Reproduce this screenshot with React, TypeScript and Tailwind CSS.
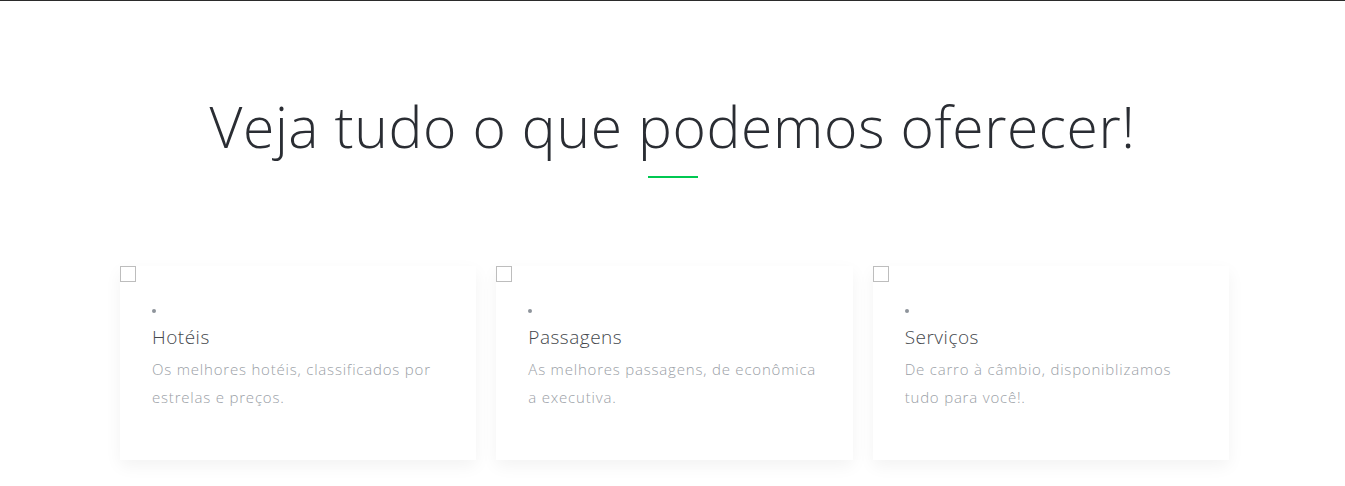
const cards = [
  {
    title: "Hotéis",
    text: "Os melhores hotéis, classificados por estrelas e preços.",
  },
  {
    title: "Passagens",
    text: "As melhores passagens, de econômica a executiva.",
  },
  {
    title: "Serviços",
    text: "De carro à câmbio, disponiblizamos tudo para você!.",
  },
];

export default function App() {
  return (
    <div className="min-h-[486px] bg-white font-['Open_Sans',sans-serif] font-light border-t border-[#2b2b2b]">
      <div className="pt-[91px] text-center">
        <h2 className="text-[57px] leading-[1.2] tracking-[0.6px] text-[#2a2d33] font-light">
          Veja tudo o que podemos oferecer!
        </h2>
        <div className="mx-auto mt-[16px] h-[2px] w-[50px] bg-[#00c851]" />
      </div>

      <div className="ml-[120px] mt-[88px] grid w-[1109px] grid-cols-3 gap-5">
        {cards.map((c) => (
          <div
            key={c.title}
            className="relative h-[194px] bg-white shadow-[0_6px_16px_rgba(0,0,0,0.05)]"
          >
            <div className="h-4 w-4 border border-[#bdbdbd]" />
            <div className="pl-8 pt-[27px]">
              <div className="h-[4px] w-[4px] rounded-full bg-[#8e949b]" />
              <h3 className="mt-[10px] text-[19px] leading-[28px] tracking-[0.5px] text-[#45484d] font-light">
                {c.title}
              </h3>
              <p className="mt-[4px] w-[298px] text-[15px] leading-[28px] tracking-[0.8px] text-[#9aa0a6] font-light">
                {c.text}
              </p>
            </div>
          </div>
        ))}
      </div>
    </div>
  );
}
